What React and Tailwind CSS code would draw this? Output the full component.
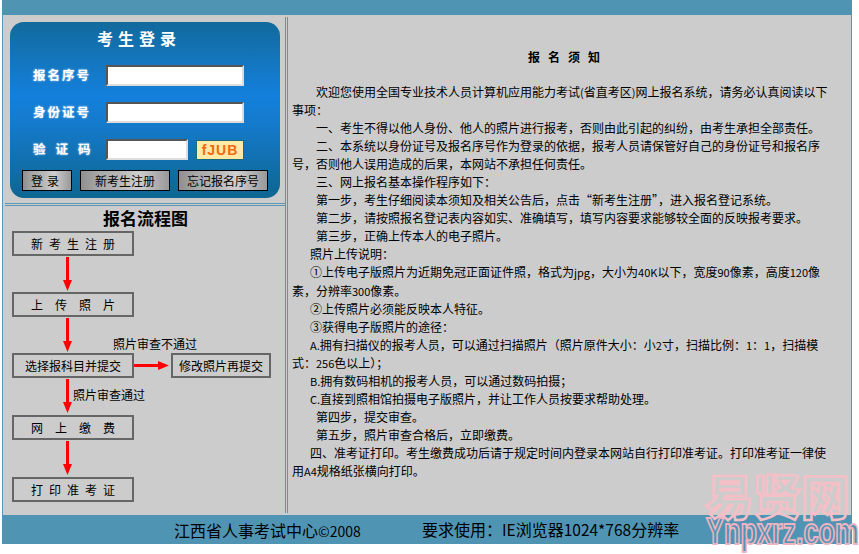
// half-width source text, punctuation gets widened below
const lines = [
  [24, '欢迎您使用全国专业技术人员计算机应用能力考试(省直考区)网上报名系统,请务必认真阅读以下'],
  [0, '事项:'],
  [24, '一、考生不得以他人身份、他人的照片进行报考,否则由此引起的纠纷,由考生承担全部责任。'],
  [24, '二、本系统以身份证号及报名序号作为登录的依据,报考人员请保管好自己的身份证号和报名序'],
  [0, '号,否则他人误用造成的后果,本网站不承担任何责任。'],
  [24, '三、网上报名基本操作程序如下:'],
  [24, '第一步,考生仔细阅读本须知及相关公告后,点击“新考生注册”,进入报名登记系统。'],
  [24, '第二步,请按照报名登记表内容如实、准确填写,填写内容要求能够较全面的反映报考要求。'],
  [24, '第三步,正确上传本人的电子照片。'],
  [18, '照片上传说明:'],
  [18, '①上传电子版照片为近期免冠正面证件照,格式为jpg,大小为40K以下,宽度90像素,高度120像'],
  [0, '素,分辨率300像素。'],
  [18, '②上传照片必须能反映本人特征。'],
  [18, '③获得电子版照片的途径:'],
  [18, 'A.拥有扫描仪的报考人员,可以通过扫描照片\uFF08照片原件大小:小2寸,扫描比例:1:1,扫描模'],
  [0, '式:256色以上\uFF09;'],
  [18, 'B.拥有数码相机的报考人员,可以通过数码拍摄;'],
  [18, 'C.直接到照相馆拍摄电子版照片,并让工作人员按要求帮助处理。'],
  [24, '第四步,提交审查。'],
  [24, '第五步,照片审查合格后,立即缴费。'],
  [18, '四、准考证打印。考生缴费成功后请于规定时间内登录本网站自行打印准考证。打印准考证一律使'],
  [0, '用A4规格纸张横向打印。'],
];

const widen = (s) => s.replace(/,/g, '\uFF0C').replace(/:/g, '\uFF1A').replace(/;/g, '\uFF1B');

// latin runs are half an em wide in the picture, so they get a smaller size
const Mixed = ({ text, latin }) =>
  widen(text).split(/([A-Za-z0-9.*©()]+)/).map((part, i) =>
    i % 2 ? <span key={i} className={latin}>{part}</span> : part
  );

const btnClass =
  'h-[21px] border border-black text-[12px] leading-[19px] text-black bg-[linear-gradient(90deg,#8f8f8f,#a8a8a8_20%,#b8b8b8_45%,#cfcfcf_65%,#b4b4b4_82%,#999)]';

const DownArrow = () => (
  <svg width="9" height="36" viewBox="0 0 9 36" className="ml-[51px] block">
    <rect x="3" y="1" width="3" height="28" fill="#ff0000" />
    <path d="M0 24 L9 24 L4.5 35 Z" fill="#ff0000" />
  </svg>
);

const FlowBox = ({ children, className = 'w-[122px]' }) => (
  <div className={`h-[25px] border-2 border-[#666] flex items-center justify-center text-[12px] whitespace-pre ${className}`}>
    {children}
  </div>
);

const LoginRow = ({ label, short, tracking }) => (
  <div className="flex items-center h-[21px]">
    <span className={`w-[84px] pl-[11px] text-white font-bold text-[12.5px] whitespace-pre [text-shadow:0_0_2px_#cfe6ff] ${tracking}`}>{label}</span>
    <input
      className={`h-[21px] bg-white border-2 border-t-[#555] border-l-[#555] border-b-[#ddd] border-r-[#ddd] ${short ? 'w-[82px]' : 'w-[138px]'}`}
    />
    {short && (
      <span className="ml-[8px] w-[48px] h-[20px] border border-[#1a6a7a] bg-[#ffe9a6] text-[#f26a10] font-bold text-[14px] leading-[18px] tracking-[1px] text-center font-['Liberation_Sans',sans-serif]">
        fJUB
      </span>
    )}
  </div>
);

export default function App() {
  return (
    <div className="relative w-[859px] h-[554px] bg-white overflow-hidden text-black font-['Noto_Sans_CJK_SC',sans-serif]">
      <div className="ml-[2px] w-[850px] h-[544px] flex flex-col bg-[#cccccc] border-x border-[#5a97b5]">
        <div className="h-[15px] bg-[#5094b4] -mx-px" />

        <div className="flex-1 flex min-h-0">
          {/* left column */}
          <div className="w-[282px] pt-[7px] shrink-0">
            <div className="ml-[7px] w-[270px] h-[176px] rounded-[14px] bg-[linear-gradient(180deg,#126a9c,#1480dc_42%,#1479c8_60%,#0e6690)] flex flex-col">
              <div className="h-[33px] pt-[5px] pl-[87px] text-white font-bold text-[16px] leading-[22px] tracking-[5px]">考生登录</div>
              <div className="mt-[10px] flex flex-col gap-[16px] pl-[12px]">
                <LoginRow label="报名序号" tracking="tracking-[2px]" />
                <LoginRow label="身份证号" tracking="tracking-[2px]" />
                <LoginRow label="验证码" tracking="tracking-[10px]" short />
              </div>
              <div className="mt-[10px] flex gap-[8px] pl-[12px]">
                <button className={`${btnClass} w-[50px] tracking-[4px]`}>登录</button>
                <button className={`${btnClass} w-[90px]`}>新考生注册</button>
                <button className={`${btnClass} w-[90px]`}>忘记报名序号</button>
              </div>
            </div>

            <div className="mt-[5px] ml-[2px] border-b-[3px] border-double border-[#5a97b5]" />

            <div className="relative pl-[9px] pt-[1px]">
              <div className="h-[24px] pl-[91px] text-[17px] leading-[22px] font-bold">报名流程图</div>
              <FlowBox><span className="tracking-[6px] pl-[6px]">新考生注册</span></FlowBox>
              <DownArrow />
              <FlowBox><span className="tracking-[12px] pl-[12px]">上传照片</span></FlowBox>
              <DownArrow />
              <div className="flex items-center">
                <FlowBox>选择报科目并提交</FlowBox>
                <svg width="36" height="9" viewBox="0 0 36 9" className="block">
                  <rect x="0" y="3" width="28" height="3" fill="#ff0000" />
                  <path d="M24 0 L24 9 L35 4.5 Z" fill="#ff0000" />
                </svg>
                <FlowBox className="w-[100px] ml-[1px]">修改照片再提交</FlowBox>
              </div>
              <DownArrow />
              <FlowBox className="w-[122px] mt-[1px]"><span className="tracking-[12px] pl-[12px]">网上缴费</span></FlowBox>
              <DownArrow />
              <FlowBox className="w-[122px] mt-[1px]"><span className="tracking-[6px] pl-[6px]">打印准考证</span></FlowBox>
              <span className="absolute left-[110px] top-[130px] text-[12px] leading-[16px]">照片审查不通过</span>
              <span className="absolute left-[70px] top-[181px] text-[12px] leading-[16px]">照片审查通过</span>
            </div>
          </div>

          {/* divider */}
          <div className="w-[3px] my-[2px] border-x border-[#5a97b5] shrink-0" />

          {/* notice */}
          <div className="flex-1 pl-[4px] pt-[33px] text-[12px] leading-[18.05px] whitespace-nowrap">
            <div className="pl-[236px] h-[35px] font-bold tracking-[8px]">报名须知</div>
            {lines.map(([indent, text], i) => (
              <div key={i} style={{ paddingLeft: indent }}>
                <Mixed text={text} latin="text-[11px]" />
              </div>
            ))}
          </div>
        </div>

        <div className="h-[29px] bg-[#5094b4] -mx-px flex items-center text-[16px] whitespace-pre">
          <span className="ml-[172px] w-[248px]"><Mixed text="江西省人事考试中心©2008" latin="text-[14px]" /></span>
          <span><Mixed text="要求使用:IE浏览器1024*768分辨率" latin="text-[15.5px]" /></span>
        </div>
      </div>

      {/* watermark */}
      <div className="absolute left-[705px] top-[474px] text-[48px] leading-[40px] font-black text-transparent [-webkit-text-stroke:2.5px_#f4c0c8] whitespace-nowrap">
        易贤网
      </div>
      <div className="absolute left-[706px] top-[517px] origin-top scale-y-[1.35] text-[27px] leading-[22px] font-bold text-[#5094b4] [-webkit-text-stroke:1.5px_#eeb4c0] whitespace-nowrap font-['Liberation_Sans',sans-serif]">
        Ynpxrz.com
      </div>
    </div>
  );
}
